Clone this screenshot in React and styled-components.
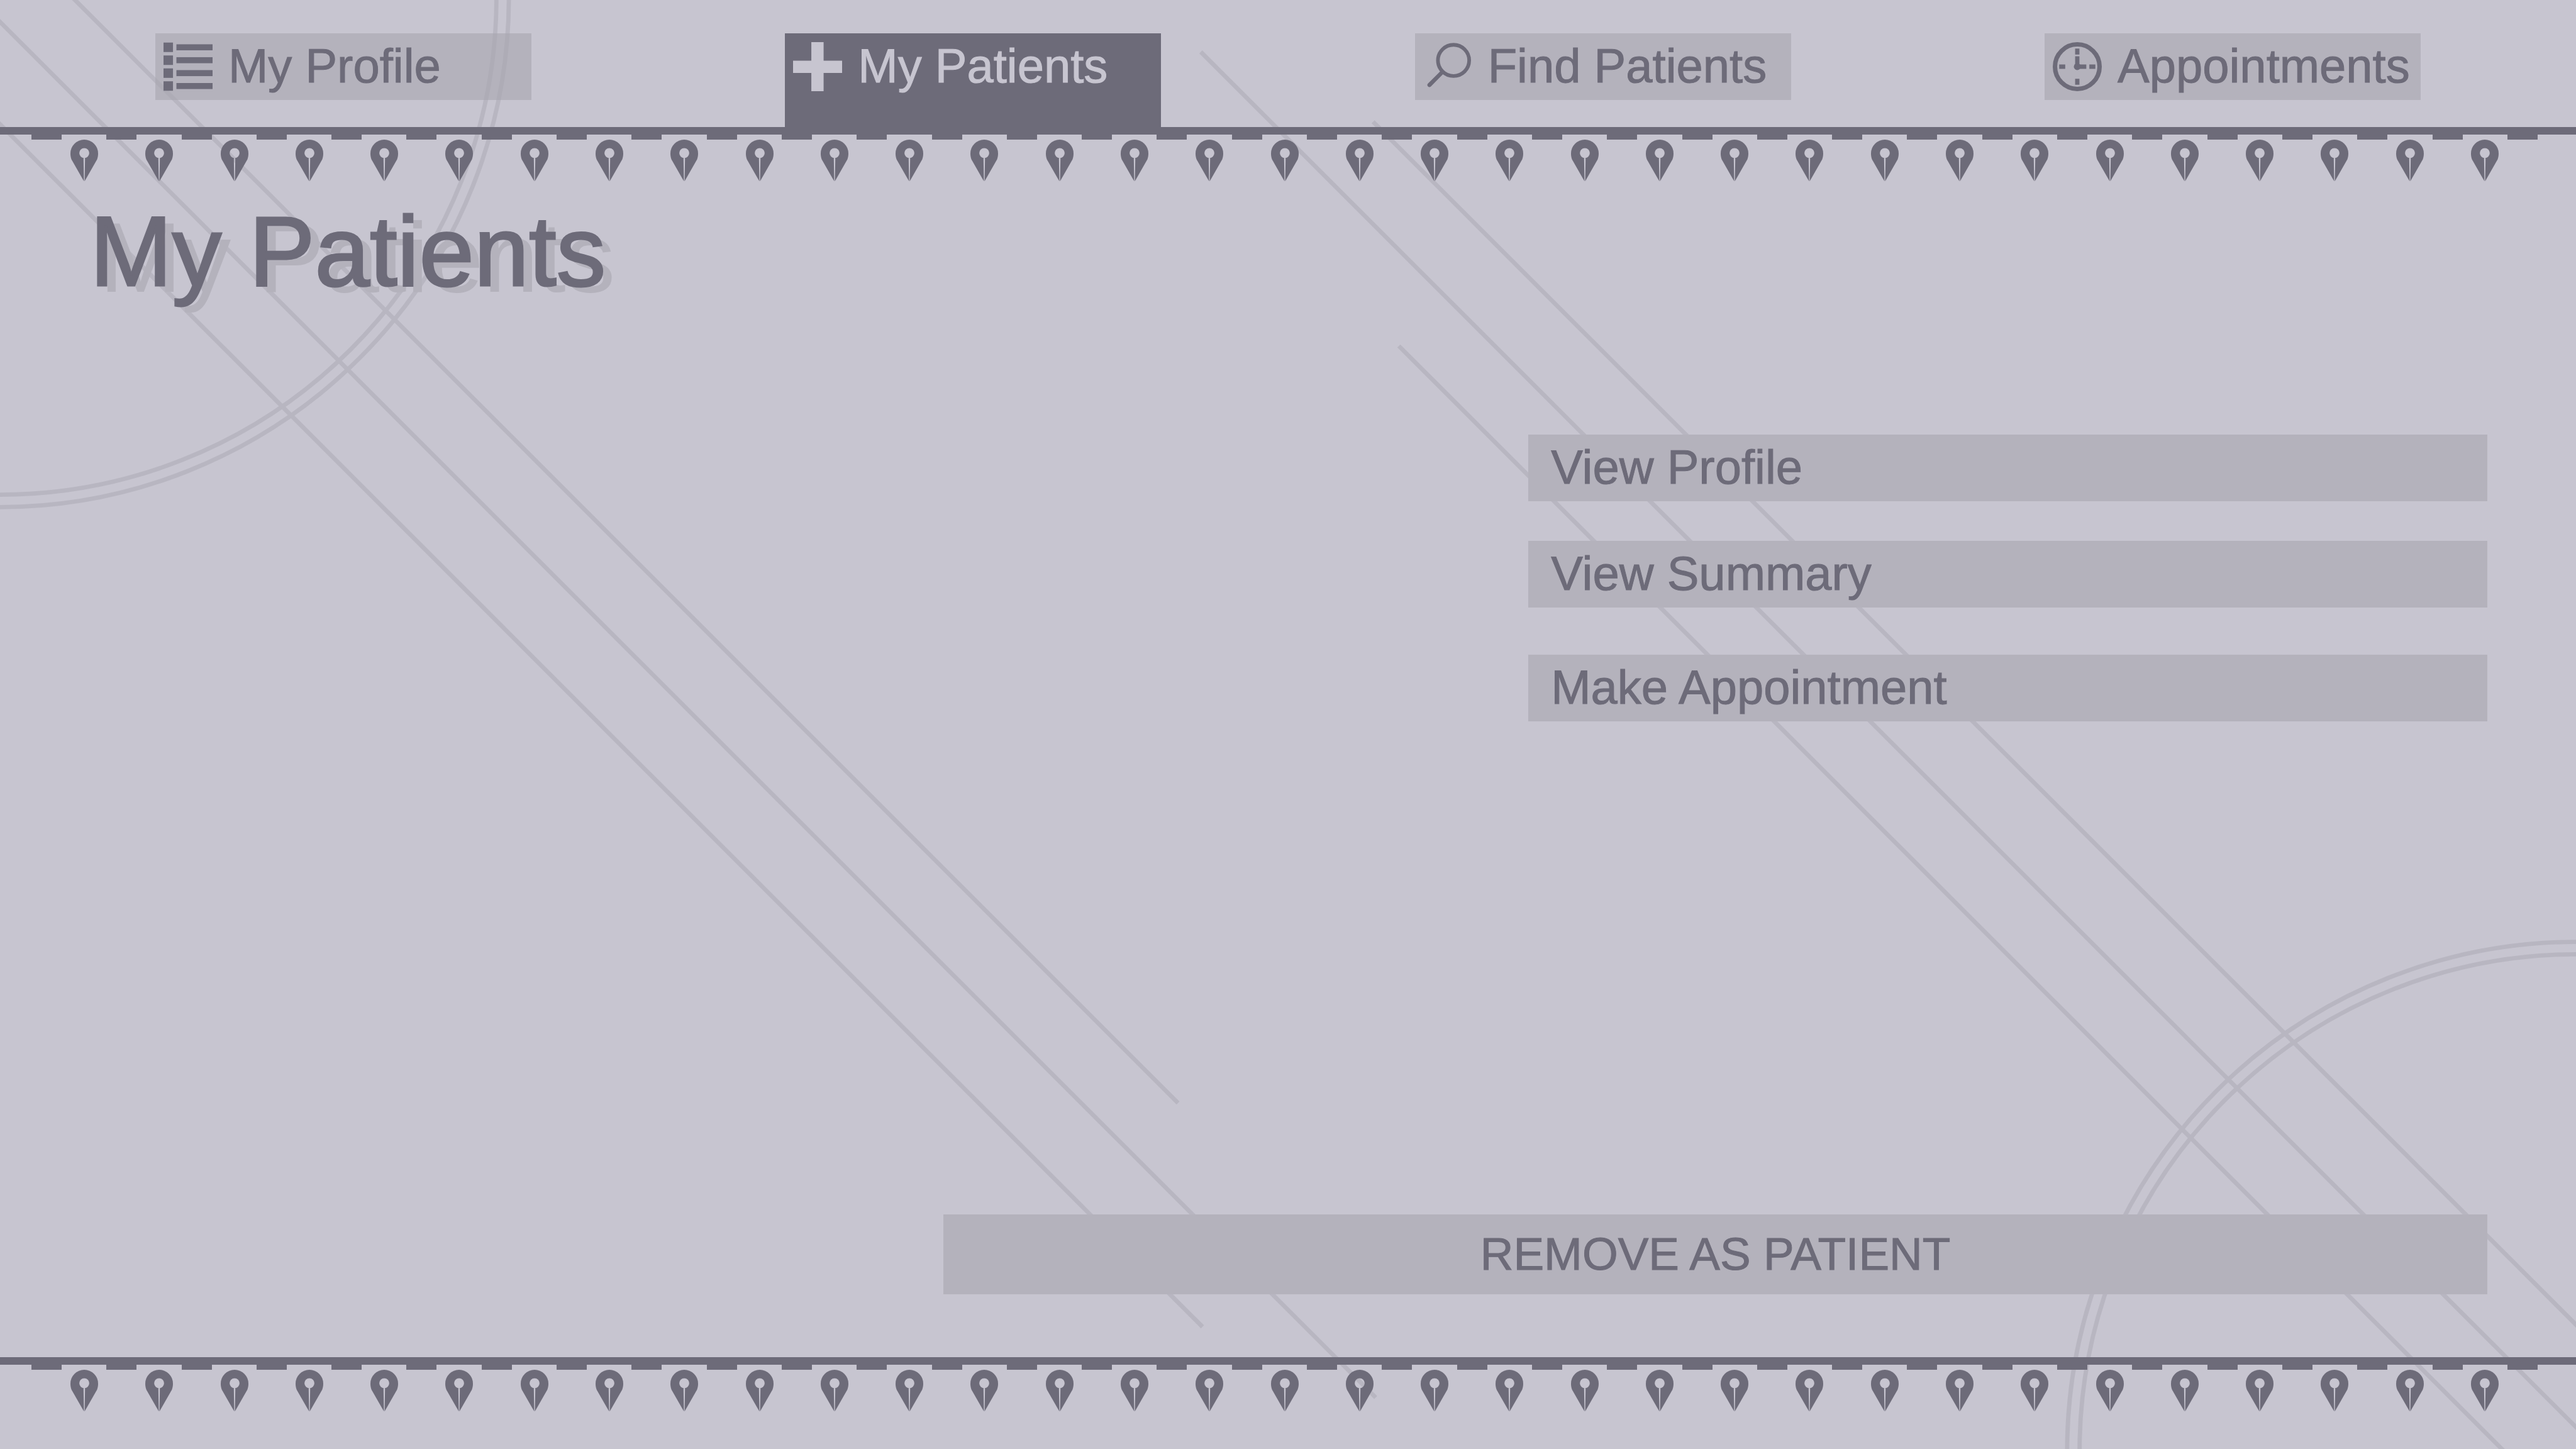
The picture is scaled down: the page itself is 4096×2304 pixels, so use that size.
import React from 'react';
import styled, { createGlobalStyle, css } from 'styled-components';

const color = {
  paper: '#c7c5d0',
  rule: '#b8b6c1',
  panel: '#b4b2bc',
  ink: '#6d6b79',
};

const GlobalStyle = createGlobalStyle`
  *, *::before, *::after { box-sizing: border-box; }
  body {
    margin: 0;
    background: ${color.paper};
    color: ${color.ink};
    font-family: 'Liberation Sans', Arial, sans-serif;
  }
`;

const Page = styled.div`
  position: relative;
  isolation: isolate;
  display: flex;
  flex-direction: column;
  min-height: 100vh;
  overflow: hidden;
`;

const Backdrop = styled.svg`
  position: absolute;
  inset: 0;
  z-index: -1;
  width: 100%;
  height: 100%;
  fill: none;
  stroke: ${color.rule};
  stroke-width: 10;
`;

const Nav = styled.nav`
  display: flex;
  justify-content: space-between;
  align-items: flex-start;
  height: 202px;
  padding: 53px 247px 0;
`;

const Tab = styled.a`
  display: flex;
  align-items: center;
  gap: 25px;
  width: 598px;
  height: 106px;
  padding-left: 13px;
  background: rgba(167, 165, 175, 0.6);
  color: ${color.ink};
  font-size: 76px;
  line-height: 86px;
  text-decoration: none;
  white-space: nowrap;
  -webkit-text-stroke: 1px currentColor;

  ${({ $active }) =>
    $active &&
    css`
      height: 149px;
      padding-bottom: 43px;
      background: ${color.ink};
      color: ${color.paper};
    `}
`;

const TabIcon = styled.svg`
  flex: none;
  width: 78px;
  height: 78px;
  fill: currentColor;
`;

const TabLabel = styled.span`
  padding-bottom: 2px;
`;

const Bar = styled.div`
  height: 12px;
  background: ${color.ink};
`;

const DashRow = styled.div`
  display: flex;
  justify-content: space-between;
  height: 8px;
  padding: 0 61px 0 50px;
`;

const Dash = styled.span`
  width: 48px;
  background: ${color.ink};
`;

const NibRow = styled.div`
  display: flex;
  justify-content: space-between;
  padding: 0 123px 0 112px;
`;

const NibIcon = styled.svg`
  display: block;
  width: 44px;
  height: 66px;
  fill: ${color.ink};
`;

const Main = styled.main`
  flex: 1;
  display: flex;
  flex-direction: column;
  align-items: flex-end;
  padding: 22px 141px 100px 143px;
`;

const Title = styled.h1`
  align-self: flex-start;
  margin: 0;
  font-size: 157px;
  font-weight: 400;
  line-height: 180px;
  text-shadow: 15px 10px 0 ${color.panel};
  -webkit-text-stroke: 3px currentColor;
`;

const ActionGroup = styled.div`
  display: flex;
  flex-direction: column;
  gap: 63px;
  width: 40%;
  margin-top: ${({ $space }) => $space}px;
`;

const Action = styled.button`
  height: 106px;
  padding: 0 36px 2px;
  border: 0;
  background: ${color.panel};
  color: ${color.ink};
  font: 76px / 86px 'Liberation Sans', Arial, sans-serif;
  text-align: left;
  cursor: pointer;
  -webkit-text-stroke: 1px currentColor;
`;

const RemoveAction = styled(Action)`
  width: 64.4%;
  height: 127px;
  margin-top: auto;
  font-size: 73px;
  text-align: center;
`;

const Footer = styled.footer`
  padding-bottom: 60px;
`;

const ListIcon = () => (
  <TabIcon viewBox="0 0 114 114" aria-hidden="true">
    {[1, 31, 61, 91].map((y) => (
      <React.Fragment key={y}>
        <rect x="0" y={y} width="22" height="22" />
        <rect x="30" y={y + 4} width="84" height="14" />
      </React.Fragment>
    ))}
  </TabIcon>
);

const CrossIcon = () => (
  <TabIcon viewBox="0 0 114 114" aria-hidden="true">
    <path d="M42.5 0H71V43H114V71.5H71V114H42.5V71.5H0V43H42.5Z" />
  </TabIcon>
);

const SearchIcon = () => (
  <TabIcon viewBox="0 0 114 114" aria-hidden="true">
    <g fill="none" stroke="currentColor" strokeLinecap="round">
      <circle cx="70.5" cy="42.5" r="36.3" strokeWidth="8.5" />
      <path d="M44.5 69.5L14.5 99.5" strokeWidth="9.5" />
    </g>
  </TabIcon>
);

const ClockIcon = () => (
  <TabIcon viewBox="0 0 114 114" aria-hidden="true">
    <circle cx="57" cy="57" r="51.8" fill="none" stroke="currentColor" strokeWidth="10.4" />
    <path d="M52 15h10v14h-10zM52 85h10v14h-10zM15 52h14v10h-14zM85 52h14v10h-14z" />
    <path d="M52 33H62V52H78V62H57L52 57Z" />
    <circle cx="57" cy="57" r="8" />
  </TabIcon>
);

const Nib = () => (
  <NibIcon viewBox="0 0 64 96" aria-hidden="true">
    <path
      fillRule="evenodd"
      d="M31 96L2.5 46C0.6 41 0 37 0 32A32 32 0 0 1 64 32C64 37 63.4 41 61.5 46L33 96ZM20.5 31A11.5 11.5 0 1 0 43.5 31A11.5 11.5 0 1 0 20.5 31ZM30.2 42.4L31.2 96H32.8L33.8 42.4Z"
    />
  </NibIcon>
);

const DASHES = Array.from({ length: 34 }, (_, i) => i);
const NIBS = Array.from({ length: 33 }, (_, i) => i);

const Frieze = () => (
  <div aria-hidden="true">
    <Bar />
    <DashRow>
      {DASHES.map((i) => (
        <Dash key={i} />
      ))}
    </DashRow>
    <NibRow>
      {NIBS.map((i) => (
        <Nib key={i} />
      ))}
    </NibRow>
  </div>
);

const TABS = [
  { label: 'My Profile', href: '#profile', Icon: ListIcon },
  { label: 'My Patients', href: '#patients', Icon: CrossIcon, active: true },
  { label: 'Find Patients', href: '#find', Icon: SearchIcon },
  { label: 'Appointments', href: '#appointments', Icon: ClockIcon },
];

export default function App() {
  return (
    <Page>
      <GlobalStyle />
      <Backdrop viewBox="0 0 6009 3380" preserveAspectRatio="none" aria-hidden="true">
        <circle cx="-1" cy="-5" r="1159" />
        <circle cx="-1" cy="-5" r="1188" />
        <circle cx="6010" cy="3385" r="1159" />
        <circle cx="6010" cy="3385" r="1188" />
        <path d="M-20 270L2805 3095" />
        <path d="M-70 -19L3209 3260" />
        <path d="M155 -20L2748 2573" />
        <path d="M2801 121L6080 3400" />
        <path d="M3203 284L6029 3110" />
        <path d="M3263 807L5856 3400" />
      </Backdrop>
      <header>
        <Nav>
          {TABS.map(({ label, href, Icon, active }) => (
            <Tab key={label} href={href} $active={active} aria-current={active ? 'page' : undefined}>
              <Icon />
              <TabLabel>{label}</TabLabel>
            </Tab>
          ))}
        </Nav>
        <Frieze />
      </header>
      <Main>
        <Title>My Patients</Title>
        <ActionGroup $space={201}>
          <Action type="button">View Profile</Action>
          <Action type="button">View Summary</Action>
        </ActionGroup>
        <ActionGroup $space={75}>
          <Action type="button">Make Appointment</Action>
        </ActionGroup>
        <RemoveAction type="button">REMOVE AS PATIENT</RemoveAction>
      </Main>
      <Footer>
        <Frieze />
      </Footer>
    </Page>
  );
}
